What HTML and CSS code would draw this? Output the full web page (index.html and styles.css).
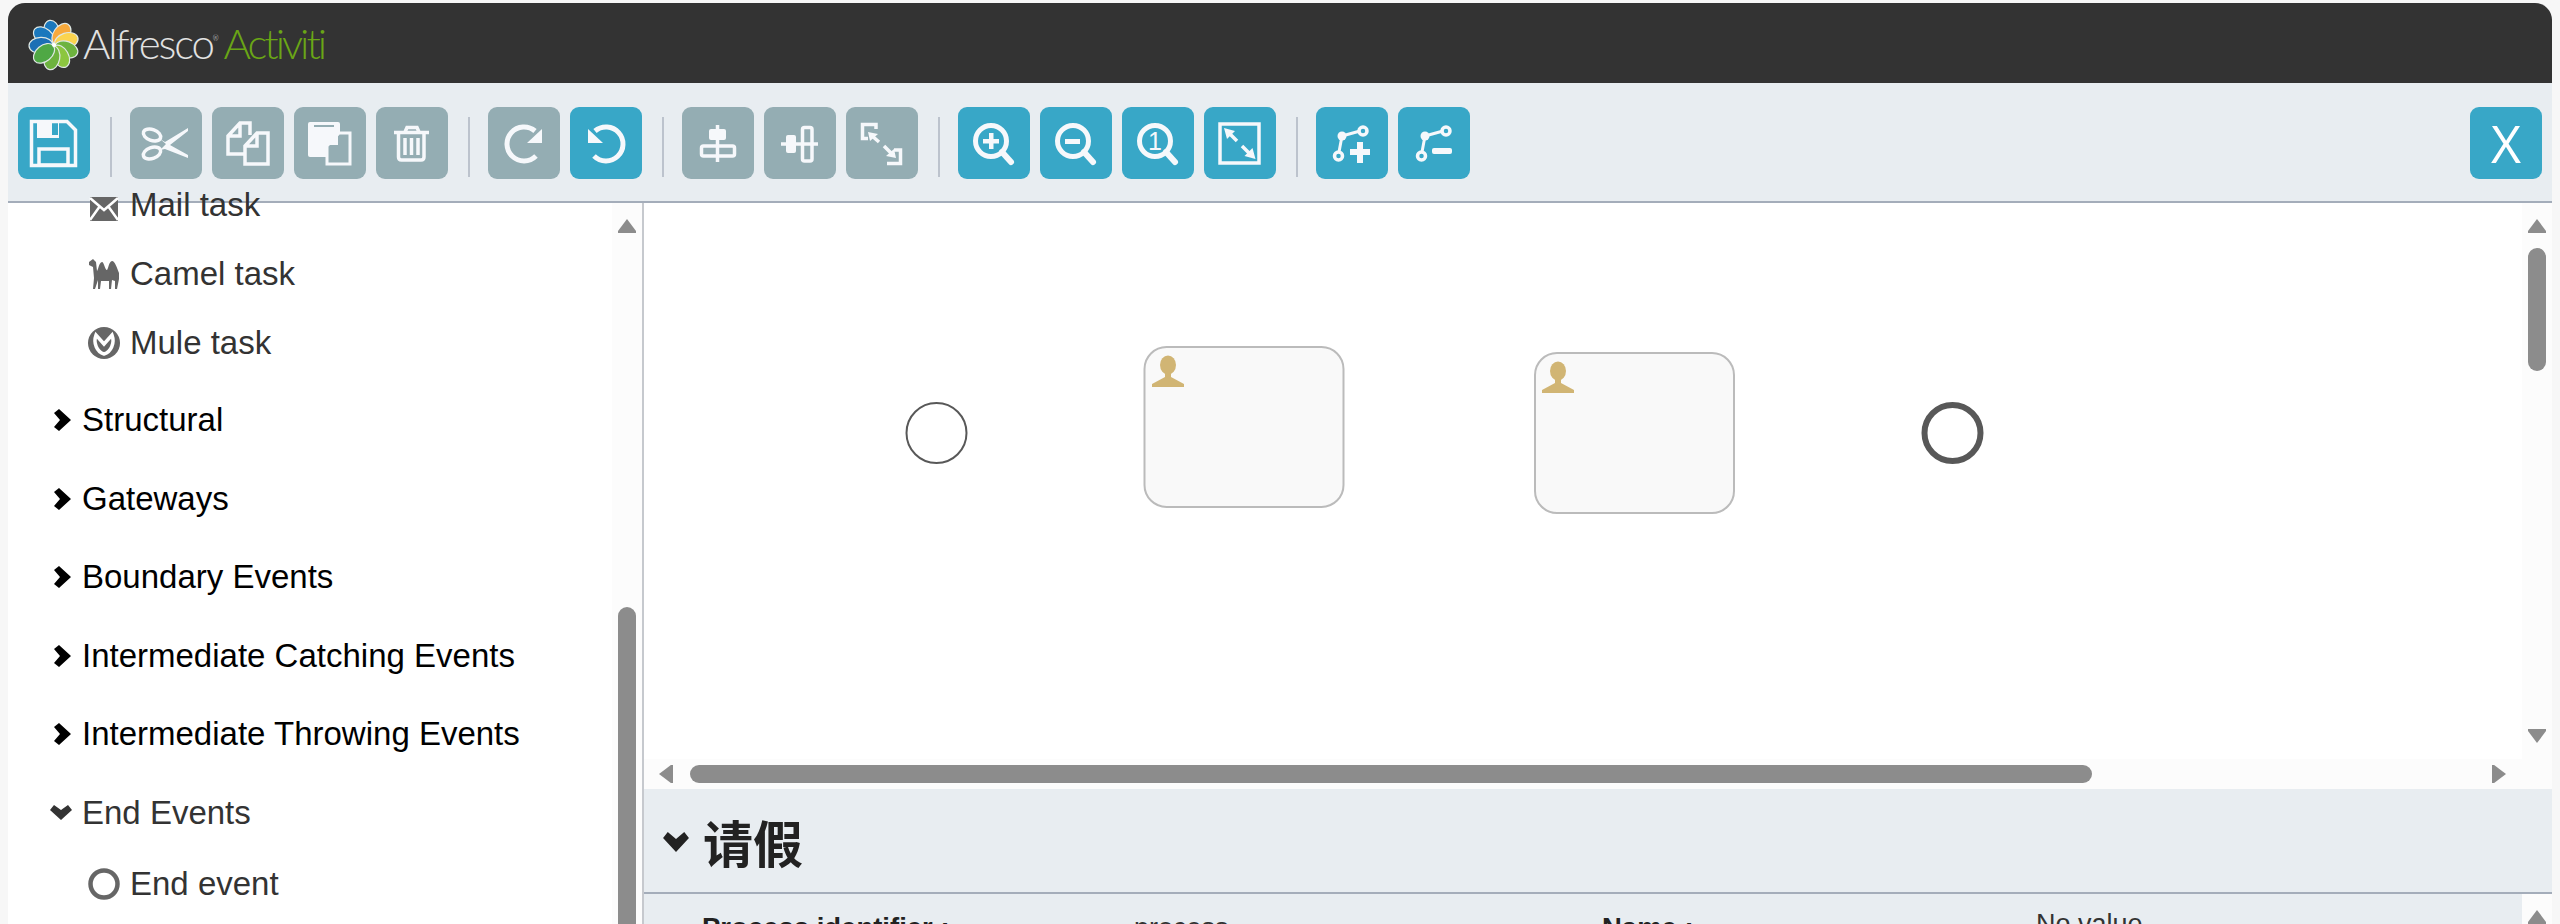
FILE: index.html
```html
<!DOCTYPE html>
<html lang="en">
<head>
    <meta charset="UTF-8">
    <title>Alfresco Activiti</title>
    <link rel="stylesheet" href="styles.css">
</head>
<body>
<div class="app">

    <!-- Header -->
    <div class="header">
        <svg class="logo-mark" width="52" height="52" viewBox="-26 -26 52 52">
            <g stroke="#dfe8e4" stroke-width="1.2">
                <ellipse cx="0" cy="-13" rx="8" ry="12" fill="#1a78bd" transform="rotate(-10)"/>
                <ellipse cx="0" cy="-13" rx="8" ry="12" fill="#1a78bd" transform="rotate(-50)"/>
                <ellipse cx="0" cy="-13" rx="8" ry="12" fill="#1c6fb5" transform="rotate(-92)"/>
                <ellipse cx="0" cy="-13" rx="8" ry="12" fill="#f7a93b" transform="rotate(35)"/>
                <ellipse cx="0" cy="-13" rx="8" ry="12" fill="#fbd44f" transform="rotate(72)"/>
                <ellipse cx="0" cy="-13" rx="8" ry="12" fill="#6db33f" transform="rotate(110)"/>
                <ellipse cx="0" cy="-13" rx="8" ry="12" fill="#8cc63f" transform="rotate(150)"/>
                <ellipse cx="0" cy="-13" rx="8" ry="12" fill="#6db33f" transform="rotate(190)"/>
                <ellipse cx="0" cy="-13" rx="8" ry="12" fill="#4fa845" transform="rotate(230)"/>
            </g>
            <circle r="2" fill="#fff"/>
        </svg>
        <span class="logo-name">Alfresco<sup class="reg">®</sup></span>
        <span class="logo-product">Activiti</span>
    </div>

    <!-- Toolbar -->
    <div class="toolbar">
        <button class="tool"><svg viewBox="0 0 72 72">
            <path class="line" d="M13.500 14.500H49L57.500 23V58.500H13.500Z"/>
            <path class="solid" fill-rule="evenodd" d="M19 15H41V31H19ZM34 16V28H40V16Z"/>
            <rect class="line" x="21" y="42" width="29" height="16"/>
        </svg></button>
        <span class="sep"></span>
        <div class="group">
            <button class="tool off"><svg viewBox="0 0 72 72">
                <ellipse class="line" cx="22" cy="28" rx="9" ry="5.500" transform="rotate(20 22 28)"/>
                <ellipse class="line" cx="22" cy="46" rx="9" ry="5.500" transform="rotate(-20 22 46)"/>
                <path class="solid" d="M30 32L35 35L58 21V24L40 38L58 48V51L35 42L30 43L36 37Z"/>
            </svg></button>
            <button class="tool off"><svg viewBox="0 0 72 72">
                <path class="line" d="M32 47H16V29L28 16H38V28M16 29H28V16"/>
                <path class="line" d="M33 39L45 26H56V57H33ZM33 39H45V26"/>
            </svg></button>
            <button class="tool off"><svg viewBox="0 0 72 72">
                <rect class="solid" x="14" y="15" width="32" height="35" rx="2"/>
                <rect x="20" y="18" width="20" height="2" fill="#94adb3"/>
                <path d="M33 39L45 26H56V57H33Z" fill="#94adb3" stroke="#f6f8fb" stroke-width="3"/>
                <path class="solid" d="M33 38L44 27V38Z"/>
            </svg></button>
            <button class="tool off"><svg viewBox="0 0 72 72">
                <path class="line" d="M29 25L31 20.500H41L43 25M18 25.500H53"/>
                <path class="line" d="M22.500 26V50Q22.500 53 25.500 53H45Q48 53 48 50V26"/>
                <path class="line" d="M29 31V48M35.500 31V48M42 31V48"/>
            </svg></button>
        </div>
        <span class="sep"></span>
        <div class="group">
            <button class="tool off"><svg viewBox="0 0 72 72">
                <path class="line thick" d="M47 24A17 17 0 1 0 48 49"/>
                <path class="solid" d="M54 22V36H39Z"/>
            </svg></button>
            <button class="tool"><svg viewBox="0 0 72 72">
                <path class="line thick" d="M25 24A17 17 0 1 1 24 49"/>
                <path class="solid" d="M18 22V36H33Z"/>
            </svg></button>
        </div>
        <span class="sep"></span>
        <div class="group">
            <button class="tool off"><svg viewBox="0 0 72 72">
                <path class="line" d="M35.500 18V55"/>
                <rect class="solid" x="27" y="22" width="17" height="11" rx="2"/>
                <rect class="line" x="19.500" y="39" width="33" height="10" rx="2" fill="#94adb3"/>
            </svg></button>
            <button class="tool off"><svg viewBox="0 0 72 72">
                <path class="line" d="M17 37H54"/>
                <rect class="solid" x="22" y="28" width="10" height="18" rx="2"/>
                <rect class="line" x="38.500" y="20.500" width="9.500" height="33.500" rx="2" fill="#94adb3"/>
            </svg></button>
            <button class="tool off"><svg viewBox="0 0 72 72">
                <path class="line" d="M30 22V17.500H16.500V31.500H22"/>
                <path class="line" d="M33 35L25 28M38 39L46 47"/>
                <path class="solid" d="M22 25L32 27L24 34ZM50 51L40 49L48 42Z"/>
                <path class="line" d="M41 56.500H54.500V43H48"/>
            </svg></button>
        </div>
        <span class="sep"></span>
        <div class="group">
            <button class="tool"><svg viewBox="0 0 72 72">
                <circle class="line thick" cx="33" cy="34" r="15.500"/>
                <path class="line heavy" d="M44 45L53 55"/>
                <path class="solid" d="M31 26H35.500V32H41V36.500H35.500V42H31V36.500H25V32H31Z"/>
            </svg></button>
            <button class="tool"><svg viewBox="0 0 72 72">
                <circle class="line thick" cx="33" cy="34" r="15.500"/>
                <path class="line heavy" d="M44 45L53 55"/>
                <rect class="solid" x="25" y="32" width="15" height="5"/>
            </svg></button>
            <button class="tool"><svg viewBox="0 0 72 72">
                <circle class="line thick" cx="33" cy="34" r="15.500"/>
                <path class="line heavy" d="M44 45L53 55"/>
                <text class="zoom-one" x="33" y="43">1</text>
            </svg></button>
            <button class="tool"><svg viewBox="0 0 72 72">
                <rect class="line" x="16" y="17" width="39" height="39"/>
                <path class="line" d="M33 34L25 26M38 39L46 47"/>
                <path class="solid" d="M20 21L31 24L23 32ZM51.500 52L40.500 49L48.500 41Z"/>
            </svg></button>
        </div>
        <span class="sep"></span>
        <div class="group">
            <button class="tool"><svg viewBox="0 0 72 72">
                <path class="line thin" d="M26 29L44 24M26 29L23 45"/>
                <circle class="solid" cx="26" cy="29" r="4.500"/>
                <circle class="line" cx="47" cy="24" r="4"/>
                <circle class="line" cx="22.500" cy="49" r="4"/>
                <path class="solid" d="M41 35H47V42H54V48H47V56H41V48H34V42H41Z"/>
            </svg></button>
            <button class="tool"><svg viewBox="0 0 72 72">
                <path class="line thin" d="M27 29L45 24M27 29L24 45"/>
                <circle class="solid" cx="27" cy="29" r="4.500"/>
                <circle class="line" cx="48" cy="24" r="4"/>
                <circle class="line" cx="23.500" cy="49" r="4"/>
                <rect class="solid" x="34" y="41" width="20" height="6" rx="2"/>
            </svg></button>
        </div>
        <button class="tool close">X</button>
    </div>

    <div class="main">

        <!-- Palette -->
        <div class="palette">
            <div class="stencils">
                <div class="item">
                    <svg class="item-icon" viewBox="0 0 32 32">
                        <rect x="2" y="8" width="28" height="24" fill="#666"/>
                        <path d="M2 9L16 21L30 9M2 31L12 17M30 31L20 17" fill="none" stroke="#fff" stroke-width="2.500"/>
                    </svg>
                    <span>Mail task</span>
                </div>
                <div class="item">
                    <svg class="item-icon" viewBox="0 0 32 32">
                        <path d="M1 4L5 1L8 4L9 13C10 13 11 4 14 4C16 4 17 12 19 12C20 12 21 3 24 3C27 3 29 10 31 15V21L29 31H27L27 23L24 22L23 31H21L21 23H13L12 31H10L10 22L7 31H5L6 20L5 9L1 7Z" fill="#666"/>
                    </svg>
                    <span>Camel task</span>
                </div>
                <div class="item">
                    <svg class="item-icon" viewBox="0 0 32 32">
                        <circle cx="16" cy="16" r="16" fill="#666"/>
                        <path d="M8 8C5 16 9 25 16 27C23 25 27 16 24 8L16 17Z" fill="none" stroke="#fff" stroke-width="3.500"/>
                    </svg>
                    <span>Mule task</span>
                </div>
                <div class="sub-end"></div>
                <div class="stencil-group">
                    <svg class="chevron" viewBox="0 0 17 22"><path d="M0 4L5 0L17 11L5 22L0 18L6 11Z"/></svg>
                    <span>Structural</span>
                </div>
                <div class="stencil-group">
                    <svg class="chevron" viewBox="0 0 17 22"><path d="M0 4L5 0L17 11L5 22L0 18L6 11Z"/></svg>
                    <span>Gateways</span>
                </div>
                <div class="stencil-group">
                    <svg class="chevron" viewBox="0 0 17 22"><path d="M0 4L5 0L17 11L5 22L0 18L6 11Z"/></svg>
                    <span>Boundary Events</span>
                </div>
                <div class="stencil-group">
                    <svg class="chevron" viewBox="0 0 17 22"><path d="M0 4L5 0L17 11L5 22L0 18L6 11Z"/></svg>
                    <span>Intermediate Catching Events</span>
                </div>
                <div class="stencil-group">
                    <svg class="chevron" viewBox="0 0 17 22"><path d="M0 4L5 0L17 11L5 22L0 18L6 11Z"/></svg>
                    <span>Intermediate Throwing Events</span>
                </div>
                <div class="stencil-group open">
                    <svg class="chevron-down" viewBox="0 0 22 15"><path d="M4 0L11 5L18 0L22 5L11 15L0 5Z"/></svg>
                    <span>End Events</span>
                </div>
                <div class="item after-group">
                    <svg class="item-icon" viewBox="0 0 32 32">
                        <circle cx="16" cy="16" r="13.500" fill="#fff" stroke="#666" stroke-width="4.500"/>
                    </svg>
                    <span>End event</span>
                </div>
            </div>
            <div class="gutter">
                <span class="arrow-up"></span>
                <span class="thumb palette-thumb"></span>
            </div>
        </div>

        <div class="work">

            <!-- Canvas -->
            <div class="canvas-wrap">
                <div class="canvas">
                    <svg width="1878" height="556" viewBox="0 0 1878 556">
                        <circle cx="292.500" cy="230" r="30" fill="#fff" stroke="#585858" stroke-width="2"/>
                        <rect class="task" x="500.500" y="144" width="199" height="160" rx="22"/>
                        <g class="person">
                            <ellipse cx="524" cy="162" rx="8" ry="9.500"/>
                            <path d="M521 168H527V174L540 181V184H508V181L521 174Z"/>
                        </g>
                        <rect class="task" x="891" y="150" width="199" height="160" rx="22"/>
                        <g class="person" transform="translate(390 6)">
                            <ellipse cx="524" cy="162" rx="8" ry="9.500"/>
                            <path d="M521 168H527V174L540 181V184H508V181L521 174Z"/>
                        </g>
                        <circle cx="1308.500" cy="230" r="28" fill="#fff" stroke="#585858" stroke-width="6"/>
                    </svg>
                </div>
                <div class="gutter canvas-gutter">
                    <span class="arrow-up"></span>
                    <span class="thumb canvas-thumb"></span>
                    <span class="arrow-down"></span>
                </div>
            </div>
            <div class="hbar">
                <span class="arrow-left"></span>
                <span class="hthumb"></span>
                <span class="arrow-right"></span>
            </div>

            <!-- Properties -->
            <div class="props">
                <div class="props-title">
                    <svg class="title-chevron" viewBox="0 0 22 17"><path d="M4 0L11 6L18 0L22 5L11 17L0 5Z"/></svg>
                    <h2>请假</h2>
                </div>
                <div class="props-body">
                    <div class="fields">
                        <div class="field">
                            <span class="field-name">Process identifier :</span>
                            <span class="field-value">process</span>
                        </div>
                        <div class="field">
                            <span class="field-name">Name :</span>
                            <span class="field-value no-value">No value</span>
                        </div>
                    </div>
                    <div class="gutter props-gutter">
                        <span class="arrow-up"></span>
                    </div>
                </div>
            </div>
        </div>
    </div>
</div>
</body>
</html>
```

FILE: styles.css
```css
html, body {
    margin: 0;
    height: 924px;
    overflow: hidden;
}
body {
    background: #f7f7f7;
    font-family: "Liberation Sans", Arial, sans-serif;
    color: #333;
}
.app {
    margin: 3px 8px 0;
    height: 921px;
    display: flex;
    flex-direction: column;
    background: #fff;
    border-radius: 17px 17px 0 0;
    overflow: hidden;
}

/* header */
.header {
    height: 80px;
    flex: none;
    background: #333;
    display: flex;
    align-items: center;
    padding-left: 20px;
    font-family: Lato, "Liberation Sans", sans-serif;
    font-weight: 300;
    font-size: 42px;
}
.logo-mark {
    margin-top: 4px;
    margin-right: 3px;
}
.logo-name {
    color: #e2e2e2;
    letter-spacing: -2.200px;
}
.reg {
    font-size: 7px;
    letter-spacing: 0;
    vertical-align: 18px;
    line-height: 0;
}
.logo-product {
    color: #6aa616;
    margin-left: 5px;
    letter-spacing: -3px;
}

/* toolbar */
.toolbar {
    height: 120px;
    flex: none;
    box-sizing: border-box;
    background: #e8edf1;
    border-bottom: 2px solid #a4adba;
    padding: 24px 10px 0;
    display: flex;
    align-items: flex-start;
}
.group {
    display: flex;
    gap: 10px;
}
.sep {
    width: 2px;
    height: 60px;
    margin: 10px 18px 0 20px;
    background: #bcc3cd;
}
.tool {
    width: 72px;
    height: 72px;
    padding: 0;
    border: none;
    border-radius: 9px;
    background: #38a7c7;
    display: block;
}
.tool.off {
    background: #94adb3;
}
.tool svg {
    display: block;
    width: 72px;
    height: 72px;
}
.tool.close {
    margin-left: auto;
    font-family: "Open Sans", sans-serif;
    font-size: 52px;
    line-height: 72px;
    color: #fff;
}
.line {
    fill: none;
    stroke: #f6f8fb;
    stroke-width: 3.500;
}
.line.thick {
    stroke-width: 5;
}
.line.heavy {
    stroke-width: 6;
    stroke-linecap: round;
}
.line.thin {
    stroke-width: 3;
}
.solid {
    fill: #f6f8fb;
}
.zoom-one {
    font-family: "Liberation Sans", sans-serif;
    font-size: 25px;
    text-anchor: middle;
    fill: #f6f8fb;
}

/* main area */
.main {
    flex: 1;
    min-height: 0;
    display: flex;
}
.palette {
    width: 636px;
    flex: none;
    box-sizing: border-box;
    border-right: 2px solid #c6c9ce;
    display: flex;
}
.stencils {
    flex: 1;
    overflow: hidden;
    font-size: 33px;
    line-height: 40px;
    margin-top: -33px;
}
.item {
    height: 69px;
    display: flex;
    align-items: center;
    gap: 10px;
    padding-left: 80px;
}
.item-icon {
    width: 32px;
    height: 32px;
    flex: none;
}
.sub-end {
    height: 4px;
}
.after-group {
    margin-top: -3px;
}
.stencil-group {
    height: 78.500px;
    display: flex;
    align-items: center;
    gap: 11px;
    padding-left: 46px;
    color: #000;
}
.stencil-group.open {
    color: #333;
    gap: 10px;
    padding-left: 42px;
}
.chevron {
    width: 17px;
    height: 22px;
    fill: #000;
    flex: none;
}
.chevron-down {
    width: 22px;
    height: 15px;
    fill: #333;
    flex: none;
}

/* scrollbars */
.gutter {
    width: 30px;
    flex: none;
    background: #fcfcfc;
    box-sizing: border-box;
    padding: 16px 6px 0;
    display: flex;
    flex-direction: column;
    overflow: hidden;
}
.thumb {
    display: block;
    width: 18px;
    flex: none;
    background: #8c8c8c;
    border-radius: 9px;
}
.palette-thumb {
    height: 400px;
    margin-top: 374px;
}
.canvas-thumb {
    height: 123px;
    margin-top: 15px;
}
.arrow-up, .arrow-down, .arrow-left, .arrow-right {
    display: block;
    flex: none;
    background: #8c8c8c;
}
.arrow-up {
    width: 18px;
    height: 14px;
    clip-path: polygon(50% 0, 100% 85%, 100% 100%, 0 100%, 0 85%);
}
.arrow-down {
    width: 18px;
    height: 14px;
    margin-top: auto;
    margin-bottom: 16px;
    clip-path: polygon(0 0, 100% 0, 100% 15%, 50% 100%, 0 15%);
}
.arrow-left {
    width: 14px;
    height: 18px;
    clip-path: polygon(100% 0, 100% 100%, 85% 100%, 0 50%, 85% 0);
}
.arrow-right {
    width: 14px;
    height: 18px;
    margin-left: 400px;
    clip-path: polygon(0 0, 15% 0, 100% 50%, 15% 100%, 0 100%);
}

/* canvas */
.work {
    flex: 1;
    min-width: 0;
    display: flex;
    flex-direction: column;
}
.canvas-wrap {
    height: 556px;
    flex: none;
    display: flex;
}
.canvas {
    flex: 1;
    min-width: 0;
    overflow: hidden;
    background: #fff;
}
.canvas svg {
    display: block;
}
.task {
    fill: #f9f9f9;
    stroke: #bbb;
    stroke-width: 2;
}
.person {
    fill: #d1b574;
}
.hbar {
    height: 30px;
    flex: none;
    background: #fcfcfc;
    display: flex;
    align-items: center;
    padding-left: 15px;
}
.hthumb {
    display: block;
    width: 1402px;
    height: 18px;
    margin-left: 17px;
    background: #8c8c8c;
    border-radius: 9px;
}

/* properties */
.props {
    flex: 1;
    min-height: 0;
    background: #e8edf1;
    display: flex;
    flex-direction: column;
}
.props-title {
    height: 105px;
    flex: none;
    box-sizing: border-box;
    border-bottom: 2px solid #a4adba;
    display: flex;
    align-items: center;
    gap: 14px;
    padding-left: 19px;
}
.title-chevron {
    width: 26px;
    height: 20px;
    fill: #222;
    margin-top: 2px;
}
.props-title h2 {
    margin: 0;
    font-family: "Noto Sans CJK SC", sans-serif;
    font-size: 50px;
    line-height: 60px;
    font-weight: 700;
    color: #222;
}
.props-body {
    flex: 1;
    min-height: 0;
    display: flex;
    overflow: hidden;
}
.fields {
    flex: 1;
    display: flex;
    padding: 18px 0 0 58px;
    font-size: 27px;
    line-height: 32px;
}
.field {
    width: 900px;
    flex: none;
    display: flex;
}
.field-name {
    width: 432px;
    flex: none;
    font-size: 27.500px;
    font-weight: 700;
    color: #222;
}
.field-value {
    color: #333;
}
.field-value.no-value {
    margin-left: 2px;
    margin-top: -4px;
}
```
